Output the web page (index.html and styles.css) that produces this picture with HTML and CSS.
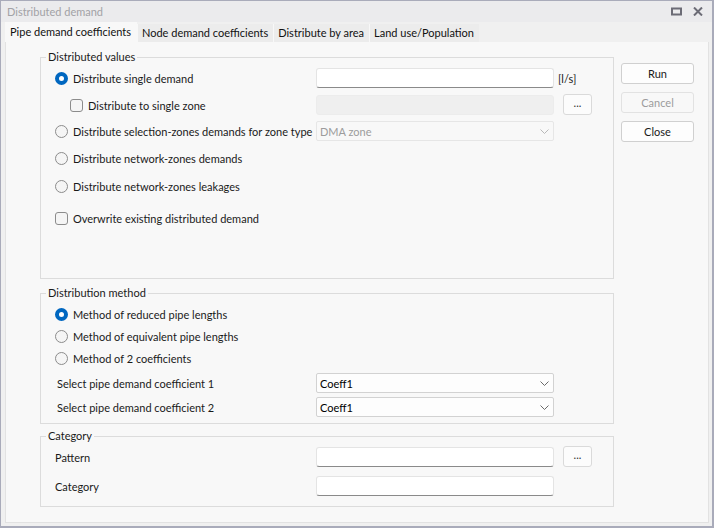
FILE: index.html
```html
<!DOCTYPE HTML>
<html>
<head>
  <meta charset="utf-8">
  <link rel="stylesheet" href="styles.css">
  <title>Distributed demand</title>
</head>
<body>
<div class="window">
  <div class="titlebar">
    <span class="title">Distributed demand</span>
    <span class="ctrls">
      <svg width="11" height="9" viewBox="0 0 11 9"><rect x="1" y="1.5" width="9" height="6" fill="none" stroke="#6c6c76" stroke-width="2"/></svg>
      <svg width="10" height="9" viewBox="0 0 10 9"><path d="M1 0.5 L9 8.5 M9 0.5 L1 8.5" stroke="#6c6c76" stroke-width="2"/></svg>
    </span>
  </div>
  <div class="tabs">
    <div class="tab active">Pipe demand coefficients</div>
    <div class="tab">Node demand coefficients</div>
    <div class="tab">Distribute by area</div>
    <div class="tab">Land use/Population</div>
  </div>
  <div class="page">
    <div class="main">
      <fieldset class="group values">
        <legend>Distributed values</legend>
        <div class="row">
          <label class="lbl"><input type="radio" name="dv" checked> Distribute single demand</label>
          <input type="text" class="edit">
          <span class="unit">[l/s]</span>
        </div>
        <div class="row">
          <label class="lbl sub"><input type="checkbox"> Distribute to single zone</label>
          <input type="text" class="edit" disabled>
          <button type="button" class="dots">...</button>
        </div>
        <div class="row tight">
          <label class="lbl"><input type="radio" name="dv"> Distribute selection-zones demands for zone type</label>
          <div class="combo disabled"><span>DMA zone</span>
            <svg width="9" height="5" viewBox="0 0 9 5"><path d="M0.5 0.5 L4.5 4.5 L8.5 0.5" fill="none" stroke="#b8b8b8"/></svg>
          </div>
        </div>
        <div class="row">
          <label class="lbl"><input type="radio" name="dv"> Distribute network-zones demands</label>
        </div>
        <div class="row loose">
          <label class="lbl"><input type="radio" name="dv"> Distribute network-zones leakages</label>
        </div>
        <div class="row wide">
          <label class="lbl"><input type="checkbox"> Overwrite existing distributed demand</label>
        </div>
      </fieldset>

      <fieldset class="group method">
        <legend>Distribution method</legend>
        <div class="opt">
          <label class="lbl"><input type="radio" name="dm" checked> Method of reduced pipe lengths</label>
        </div>
        <div class="opt">
          <label class="lbl"><input type="radio" name="dm"> Method of equivalent pipe lengths</label>
        </div>
        <div class="opt">
          <label class="lbl"><input type="radio" name="dm"> Method of 2 coefficients</label>
        </div>
        <div class="sel first">
          <span class="lbl plain">Select pipe demand coefficient 1</span>
          <div class="combo"><span>Coeff1</span>
            <svg width="9" height="5" viewBox="0 0 9 5"><path d="M0.5 0.5 L4.5 4.5 L8.5 0.5" fill="none" stroke="#6a6a6a"/></svg>
          </div>
        </div>
        <div class="sel">
          <span class="lbl plain">Select pipe demand coefficient 2</span>
          <div class="combo"><span>Coeff1</span>
            <svg width="9" height="5" viewBox="0 0 9 5"><path d="M0.5 0.5 L4.5 4.5 L8.5 0.5" fill="none" stroke="#6a6a6a"/></svg>
          </div>
        </div>
      </fieldset>

      <fieldset class="group category">
        <legend>Category</legend>
        <div class="row">
          <span class="lbl">Pattern</span>
          <input type="text" class="edit">
          <button type="button" class="dots">...</button>
        </div>
        <div class="row">
          <span class="lbl">Category</span>
          <input type="text" class="edit">
        </div>
      </fieldset>
    </div>
    <div class="side">
      <button type="button" class="button">Run</button>
      <button type="button" class="button" disabled>Cancel</button>
      <button type="button" class="button">Close</button>
    </div>
  </div>
</div>
</body>
</html>
```

FILE: styles.css
```css
html, body {
  margin: 0;
  padding: 0;
  background: #f0f0f0;
}

body {
  font-family: Lato, "Noto Sans", sans-serif;
  font-size: 11px;
  color: #1a1a1a;
}

.window {
  width: 714px;
  height: 528px;
  box-sizing: border-box;
  border: 1px solid #a9abba;
  border-width: 1px 2px 2px 1px;
  background: #f0f0f0;
  display: flex;
  flex-direction: column;
}

.titlebar {
  height: 21px;
  background: #ebebed;
  display: flex;
  align-items: center;
  justify-content: space-between;
  padding: 0 9px 0 6px;
}

.title {
  color: #a2a2a6;
}

.ctrls {
  display: flex;
  gap: 11px;
  align-items: center;
}

.tabs {
  display: flex;
  height: 20px;
  padding-left: 4px;
  align-items: flex-end;
}

.tab {
  height: 18px;
  line-height: 18px;
  padding: 0 5px 0 4px;
  background: #ececec;
  border-left: 1px solid #f8f8f8;
  color: #111;
}

.tab.active {
  height: 20px;
  line-height: 20px;
  padding: 0 6px 0 5px;
  background: #f8f8f8;
  border-left: 0;
}

.page {
  flex: 1;
  margin: 0 3px 3px 4px;
  background: #f8f8f8;
  border: 1px solid #e2e2e2;
  border-top: 0;
  display: flex;
  gap: 7px;
  padding: 8px 0 0 34px;
}

.main {
  width: 574px;
  display: flex;
  flex-direction: column;
}

fieldset.group {
  margin: 0;
  min-width: 0;
  border: 1px solid #dcdcdc;
  padding: 3px 0 0 14px;
}

fieldset.group legend {
  padding: 0 2px;
  margin-left: -9px;
  line-height: 14px;
}

fieldset.values {
  height: 229px;
  box-sizing: border-box;
}

fieldset.method {
  margin-top: 7px;
  padding-top: 4px;
  padding-bottom: 6px;
}

fieldset.category {
  margin-top: 5px;
  padding-top: 3px;
  padding-bottom: 9px;
}

.row, .opt, .sel {
  display: flex;
  align-items: center;
  height: 22px;
}

.row + .row {
  margin-top: 5px;
}

.row.tight {
  margin-top: 4px;
}

.row.loose {
  margin-top: 6px;
}

.row.wide {
  margin-top: 10px;
}

.opt, .sel {
  height: 20px;
}

.opt + .opt {
  margin-top: 2px;
}

.sel {
  margin-top: 4px;
}

.sel.first {
  margin-top: 5px;
}

.category .row + .row {
  margin-top: 7px;
}

.lbl {
  width: 261px;
  flex: none;
  display: flex;
  align-items: center;
  white-space: nowrap;
}

.lbl.sub {
  padding-left: 15px;
  box-sizing: border-box;
}

.lbl.plain {
  padding-left: 2px;
  box-sizing: border-box;
}

input[type=radio], input[type=checkbox] {
  -webkit-appearance: none;
  appearance: none;
  flex: none;
  width: 13px;
  height: 13px;
  margin: 0 5px 0 0;
  box-sizing: border-box;
  border: 1px solid #8c8c8c;
  background: #f5f5f5;
}

input[type=radio] {
  border-radius: 50%;
}

input[type=radio]:checked {
  border: 4px solid #0067c0;
  background: #fff;
}

input[type=checkbox] {
  border-radius: 3px;
}

input.edit {
  width: 238px;
  height: 20px;
  box-sizing: border-box;
  margin: 0;
  border: 1px solid #e4e4e4;
  border-bottom-color: #8a8a8a;
  border-radius: 3px;
  background: #fff;
  font: inherit;
}

input.edit:disabled {
  background: #efefef;
  border-color: #ececec;
}

.unit {
  margin-left: 4px;
}

button.dots {
  width: 29px;
  height: 21px;
  margin-left: 9px;
  margin-top: -1px;
  padding: 0 0 4px;
  border: 1px solid #dadada;
  border-radius: 3px;
  background: #fcfcfc;
  font: inherit;
  color: #333;
}

.combo {
  width: 238px;
  height: 20px;
  box-sizing: border-box;
  display: flex;
  align-items: center;
  justify-content: space-between;
  padding: 0 4px 0 3px;
  border: 1px solid #d2d2d2;
  border-radius: 2px;
  background: #fdfdfd;
  color: #000;
}

.combo.disabled {
  background: #f8f8f8;
  border-color: #e6e6e6;
  color: #9c9c9c;
}

.side {
  width: 73px;
  padding-top: 13px;
  display: flex;
  flex-direction: column;
  gap: 8px;
}

button.button {
  height: 21px;
  padding: 0;
  border: 1px solid #d0d0d0;
  border-radius: 3px;
  background: #fdfdfd;
  font: inherit;
  color: #1a1a1a;
}

button.button:disabled {
  background: #f8f8f8;
  border-color: #e2e2e2;
  color: #9c9c9c;
}
```
